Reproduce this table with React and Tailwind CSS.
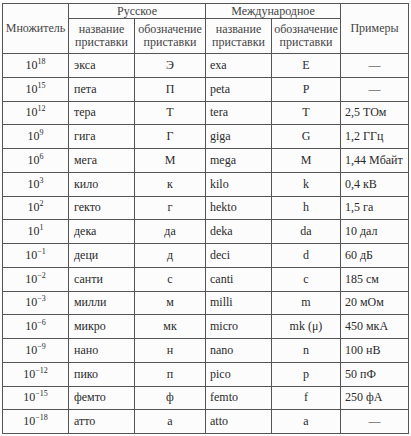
import React from 'react';

const rows = [
    ['18', 'экса', 'Э', 'exa', 'E', '—'],
    ['15', 'пета', 'П', 'peta', 'P', '—'],
    ['12', 'тера', 'Т', 'tera', 'T', '2,5 ТОм'],
    ['9', 'гига', 'Г', 'giga', 'G', '1,2 ГГц'],
    ['6', 'мега', 'М', 'mega', 'M', '1,44 Мбайт'],
    ['3', 'кило', 'к', 'kilo', 'k', '0,4 кВ'],
    ['2', 'гекто', 'г', 'hekto', 'h', '1,5 га'],
    ['1', 'дека', 'да', 'deka', 'da', '10 дал'],
    ['−1', 'деци', 'д', 'deci', 'd', '60 дБ'],
    ['−2', 'санти', 'с', 'canti', 'c', '185 см'],
    ['−3', 'милли', 'м', 'milli', 'm', '20 мОм'],
    ['−6', 'микро', 'мк', 'micro', 'mk (μ)', '450 мкА'],
    ['−9', 'нано', 'н', 'nano', 'n', '100 нВ'],
    ['−12', 'пико', 'п', 'pico', 'p', '50 пФ'],
    ['−15', 'фемто', 'ф', 'femto', 'f', '250 фА'],
    ['−18', 'атто', 'а', 'atto', 'a', '—'],
];

const cell = 'border border-[#555] p-0 align-middle';

function App() {
    return (
        <div className="w-[411px] h-[436px] bg-[#fcfcfc] pt-[3px] pl-[2px] text-[#2b2b2b] text-[12px] leading-[13px] font-['Liberation_Serif',serif]">
            <table className="table-fixed border-collapse">
                <colgroup>
                    <col className="w-[66px]" />
                    <col className="w-[66px]" />
                    <col className="w-[71px]" />
                    <col className="w-[66px]" />
                    <col className="w-[69px]" />
                    <col className="w-[68px]" />
                </colgroup>
                <thead>
                    <tr className="h-[15px]">
                        <th rowSpan={2} className={`${cell} font-normal text-center text-[#444]`}>Множитель</th>
                        <th colSpan={2} className={`${cell} font-normal text-center text-[#444]`}>Русское</th>
                        <th colSpan={2} className={`${cell} font-normal text-center text-[#444]`}>Международное</th>
                        <th rowSpan={2} className={`${cell} font-normal text-center text-[#444]`}>Примеры</th>
                    </tr>
                    <tr className="h-[35px]">
                        <th className={`${cell} font-normal text-center text-[#444]`}>название<br />приставки</th>
                        <th className={`${cell} font-normal text-center text-[#444]`}>обозначение<br />приставки</th>
                        <th className={`${cell} font-normal text-center text-[#444]`}>название<br />приставки</th>
                        <th className={`${cell} font-normal text-center text-[#444]`}>обозначение<br />приставки</th>
                    </tr>
                </thead>
                <tbody>
                    {rows.map((r) => (
                        <tr key={r[0]} className="h-[23.75px]">
                            <td className={`${cell} text-center`}>
                                10<sup className="text-[8px] -top-[5px]">{r[0]}</sup>
                            </td>
                            <td className={`${cell} pl-[5px]`}>{r[1]}</td>
                            <td className={`${cell} text-center`}>{r[2]}</td>
                            <td className={`${cell} pl-[4px]`}>{r[3]}</td>
                            <td className={`${cell} text-center`}>{r[4]}</td>
                            <td className={`${cell} ${r[5] === '—' ? 'text-center' : 'pl-[4px]'}`}>{r[5]}</td>
                        </tr>
                    ))}
                </tbody>
            </table>
        </div>
    );
}

export default App;
